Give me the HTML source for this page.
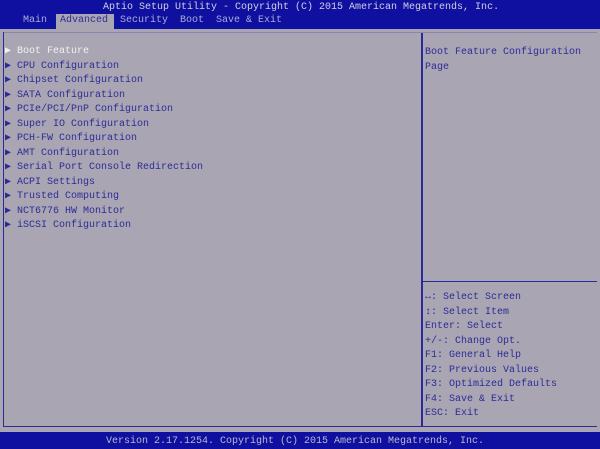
<!DOCTYPE html>
<html><head><style>
body{margin:0;width:600px;height:449px;background:#a9a5b3;position:relative;overflow:hidden;font-family:"Liberation Mono",monospace;font-size:10px;}
.t{position:absolute;white-space:pre;line-height:14px;}
#top{position:absolute;left:0;top:0;width:600px;height:29px;background:#1010a0;}
#bot{position:absolute;left:0;top:432px;width:600px;height:17px;background:#1010a0;}
.ln{position:absolute;background:#2a2a98;}
.b{color:#2c2c96}
</style></head><body>
<div id="top"></div>
<div class="t" style="left:103px;top:1px;color:#d0d0e0">Aptio Setup Utility - Copyright (C) 2015 American Megatrends, Inc.</div>
<div style="position:absolute;left:56px;top:14px;width:58px;height:15px;background:#a9a5b3"></div>
<div class="t" style="left:23px;top:14px;color:#a8acd8">Main</div>
<div class="t" style="left:60px;top:14px;color:#2c2c96">Advanced</div>
<div class="t" style="left:120px;top:14px;color:#a8acd8">Security  Boot  Save &amp; Exit</div>
<div class="ln" style="left:3px;top:32px;width:594px;height:1px;background:#8a86a8"></div>
<div class="ln" style="left:3px;top:32px;width:1px;height:395px"></div>
<div class="ln" style="left:3px;top:426px;width:594px;height:1px"></div>
<div class="ln" style="left:421px;top:33px;width:2px;height:394px"></div>
<div class="ln" style="left:423px;top:281px;width:174px;height:1px"></div>
<div class="t" style="left:5px;top:45px;color:#f0f0f0">▶ Boot Feature</div>
<div class="t b" style="left:5px;top:59.5px;line-height:14.5px">▶ CPU Configuration
▶ Chipset Configuration
▶ SATA Configuration
▶ PCIe/PCI/PnP Configuration
▶ Super IO Configuration
▶ PCH-FW Configuration
▶ AMT Configuration
▶ Serial Port Console Redirection
▶ ACPI Settings
▶ Trusted Computing
▶ NCT6776 HW Monitor
▶ iSCSI Configuration</div>
<div class="t b" style="left:425px;top:45px;line-height:15px">Boot Feature Configuration
Page</div>
<div class="t b" style="left:425px;top:291px;line-height:14.5px"><b>↔</b>: Select Screen
<b>↕</b>: Select Item
Enter: Select
+/-: Change Opt.
F1: General Help
F2: Previous Values
F3: Optimized Defaults
F4: Save &amp; Exit
ESC: Exit</div>
<div id="bot"></div>
<div class="t" style="left:106px;top:435px;color:#b8b8d0">Version 2.17.1254. Copyright (C) 2015 American Megatrends, Inc.</div>
</body></html>
